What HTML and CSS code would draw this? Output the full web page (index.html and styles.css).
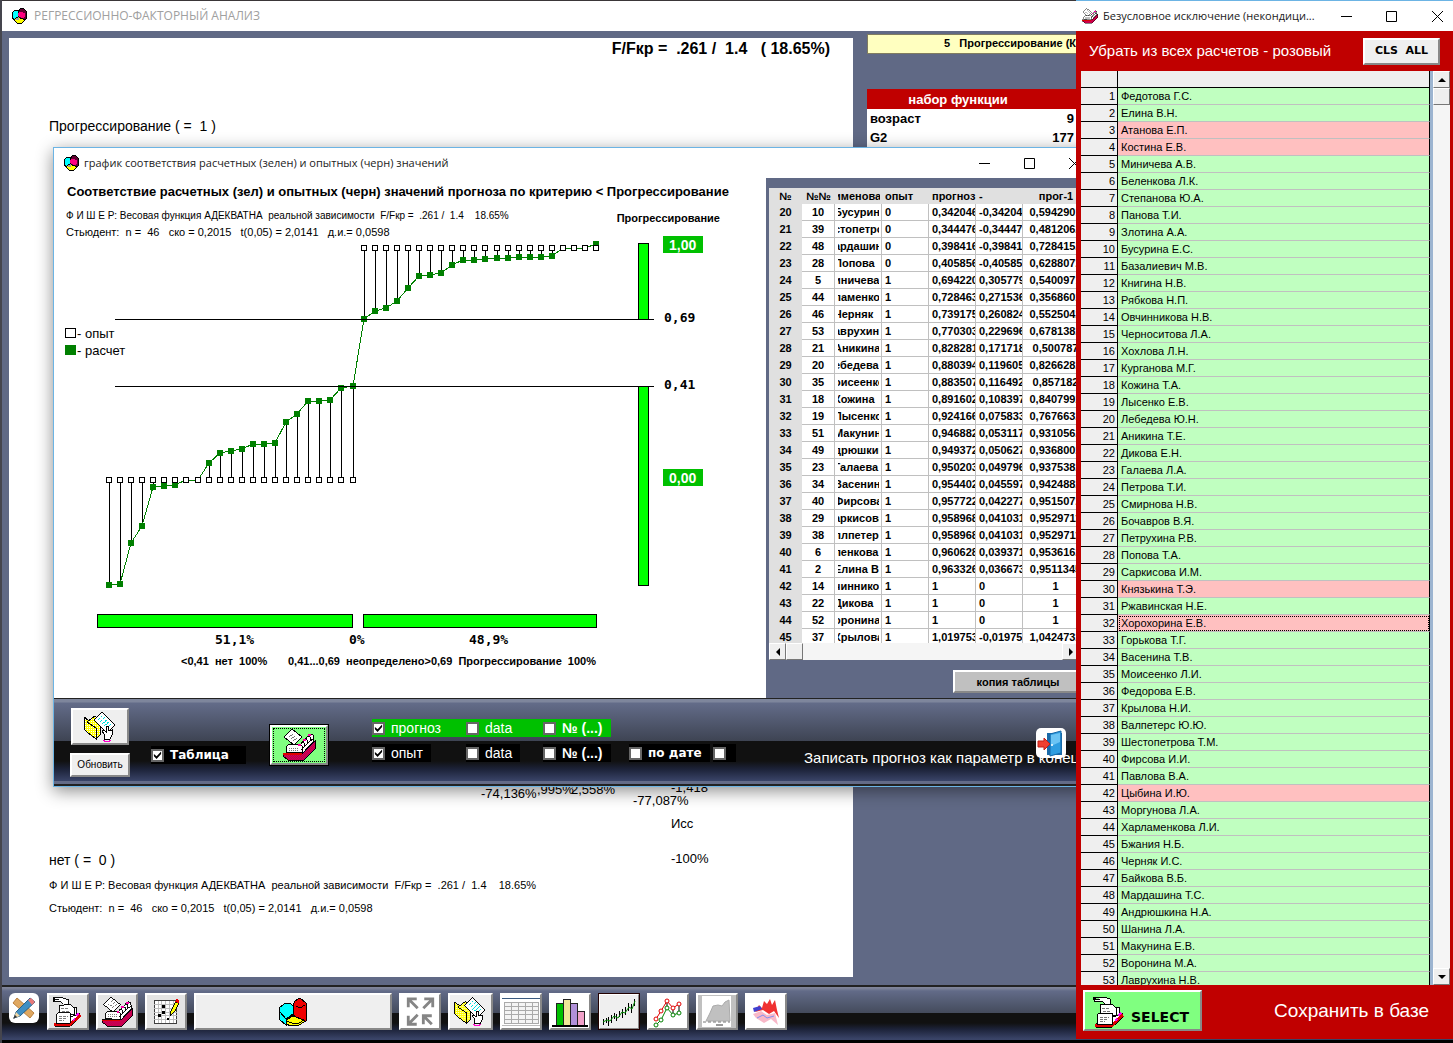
FILE: index.html
```html
<!DOCTYPE html>
<html lang="ru">
<head>
<meta charset="utf-8">
<title>Регрессионно-факторный анализ</title>
<link rel="stylesheet" href="styles.css">
</head>
<body>
<svg class="defs" aria-hidden="true">
  <defs>
    <pattern id="weave" width="2" height="2" patternUnits="userSpaceOnUse"><rect width="2" height="2" fill="#e00020"/><rect width="1" height="1" fill="#b00080"/><rect x="1" y="1" width="1" height="1" fill="#b00080"/></pattern>
    <pattern id="straw" width="2" height="2" patternUnits="userSpaceOnUse"><rect width="2" height="2" fill="#ffff00"/><rect width="1" height="1" fill="#fff"/></pattern>
    <symbol id="pie" viewBox="0 0 28 30">
      <path d="M0 11L5 7L11 6L14 9V18L7 23V28L1 23Z" fill="#0ff" stroke="#000"/>
      <path d="M1 15L7 22L14 17" fill="none" stroke="#000"/>
      <path class="slice" d="M14 8L16 4L21 1L27 6V24L24 25L14 18Z" stroke="#000"/>
      <path d="M17 9L21 11L26 8M21 11" fill="none" stroke="#000"/>
      <path d="M7 23L14 19L25 23V25L20 28L12 29L7 27Z" fill="#ff0" stroke="#000"/>
      <path d="M7 24L13 26H20L25 23" fill="none" stroke="#000"/>
    </symbol>
    <symbol id="smallpie" viewBox="0 0 16 16">
      <path d="M1 5L4 2L8 2V8L4 12L1 10Z" fill="#0ff" stroke="#000"/>
      <path d="M7 4L9 1L12 0L15 3V11L12 13L7 8Z" fill="#600030" stroke="#000"/>
      <path d="M7 5L9 4L14 5V9L11 10L7 8Z" fill="#ff0080"/>
      <path d="M3 12L7 9L14 12L11 15H6Z" fill="#ff0" stroke="#000"/>
      <path d="M4 11L8 9V12H5Z" fill="#a0a0a0"/>
    </symbol>
    <symbol id="cards" viewBox="0 0 34 34">
      <path d="M17 18L28 6L31 7L32 13L20 26Z" fill="#fff" stroke="#000"/>
      <path d="M1 25L20 26L33 13V21L22 32H6L1 28Z" fill="url(#weave)" stroke="#000"/>
      <path d="M4 24V19L7 16H18L20 18V25Z" fill="#fff" stroke="#000"/>
      <path d="M19 22L22 19V15L19 14M22 19L25 16V12L22 11M25 16L28 13V9L25 8M28 13L31 11" fill="none" stroke="#000"/>
      <path d="M2 9L10 1L20 9L12 17Z" fill="#fff" stroke="#000"/>
      <path d="M7 9L12 5M9 11L14 7M11 13L16 9M7 20H17M7 22H17" stroke="#777" stroke-dasharray="1 1" fill="none"/>
      <path d="M16 16h3v2h-3zM21 11h3v2h-3zM26 6h3v2h-3z" fill="#f0a"/>
      <path d="M1 26H20" fill="none" stroke="#e00000" stroke-width="2"/>
    </symbol>
    <symbol id="handcards" viewBox="0 0 34 34">
      <path d="M18 14H23V25H18M22 12H26V23" fill="#fff" stroke="#000"/>
      <path d="M3 29L8 26L29 19V23L19 32H3Z" fill="#fff" stroke="#000"/>
      <path d="M2 30H19L30 20" fill="none" stroke="#e00000" stroke-width="3"/>
      <path d="M7 10L19 9L23 13V20H7Z" fill="#fff" stroke="#000"/>
      <path d="M4 20L6 18H19V29H4Z" fill="#fff" stroke="#000"/>
      <path d="M9 13H17M10 16H18M7 22H16M7 24H14M7 26H12" stroke="#777" stroke-dasharray="3 1"/>
      <path d="M1 2H11L17 4V9H12L9 6H1V4H7" fill="#fff" stroke="#000"/>
      <path d="M0 2H3V5H0Z" fill="#000"/>
      <path d="M25 21L28 18M22 26L24 24" stroke="#f0f" stroke-width="2"/>
    </symbol>
    <symbol id="folder" viewBox="0 0 34 32">
      <path d="M1 6L13 15V28L4 21L1 18Z" fill="url(#straw)" stroke="#000"/>
      <path d="M4 11L12 5L17 10V24L13 28V17Z" fill="url(#straw)" stroke="#000"/>
      <path d="M11 9L19 1L32 14L24 22Z" fill="#fff" stroke="#000"/>
      <path d="M15 9L19 5M17 11L22 6M19 13L25 8M21 15L27 10M23 17L28 13" stroke="#0dd" stroke-dasharray="3 1"/>
      <path d="M21 28V23L19 20L21 19L23 21V15H25V20L29 19V24L27 28Z" fill="#fff" stroke="#000"/>
      <path d="M21 30H27M20 29H22M26 29H28" stroke="#f0c"/>
    </symbol>
  </defs>
</svg>

<div class="desktop">
  <main class="window main">
    <header class="titlebar inactive">
      <svg class="app-icon"><use href="#smallpie"/></svg>
      <h1>РЕГРЕССИОННО-ФАКТОРНЫЙ АНАЛИЗ</h1>
    </header>
    <div class="workspace">
      <article class="report">
        <p class="ratio">F/Fкр =&nbsp; .261 /&nbsp; 1.4 &nbsp; ( 18.65%)</p>
        <p class="pole">Прогрессирование ( =&nbsp; 1 )</p>
        <div class="factors">
          <span class="f f1">-74,136%</span><span class="f f2">,995%</span><span class="f f3">2,558%</span>
          <span class="f f4">-77,087%</span><span class="f f5">-1,418</span><span class="f f6">Исс</span><span class="f f7">-100%</span>
        </div>
        <p class="pole zero">нет ( =&nbsp; 0 )</p>
        <p class="stat">Ф И Ш Е Р: Весовая функция АДЕКВАТНА&nbsp; реальной зависимости&nbsp; F/Fкр =&nbsp; .261 /&nbsp; 1.4 &nbsp;&nbsp; 18.65%</p>
        <p class="stat">Стьюдент:&nbsp; n =&nbsp; 46 &nbsp; ско = 0,2015 &nbsp; t(0,05) = 2,0141 &nbsp; д.и.= 0,0598</p>
      </article>
      <aside class="side">
        <div class="criterion">5 &nbsp; Прогрессирование (Криз)</div>
        <table class="functions">
          <thead><tr><th colspan="2">набор функции</th></tr></thead>
          <tbody>
            <tr><td>возраст</td><td class="num">9</td></tr>
            <tr><td>G2</td><td class="num">177</td></tr>
          </tbody>
        </table>
      </aside>
    </div>
    <nav class="toolbar">
      <button class="round" aria-label="Инструменты"><svg viewBox="0 0 30 30"><path d="M8 5L25 20L21 25L4 10Z" fill="#e0a860" stroke="#b98040"/><path d="M5 25L7 19L21 5L26 9L11 23Z" fill="#3f8fc4" stroke="#25618c"/><path d="M19 7L22 5L26 9L23 12Z" fill="#e87a7a"/><path d="M5 25L7 19L11 23Z" fill="#f0d8a8"/><path d="M4 26L6 22L8 24Z" fill="#333"/></svg></button>
      <button class="tool" aria-label="Карточки"><svg viewBox="0 0 34 34"><use href="#handcards"/></svg></button>
      <button class="tool" aria-label="Картотека"><svg viewBox="0 0 34 34"><use href="#cards"/></svg></button>
      <button class="tool" aria-label="Правка таблицы"><svg viewBox="0 0 34 34" shape-rendering="crispEdges"><rect x="4" y="5" width="24" height="24" fill="#fff" stroke="#333"/><path d="M8 5V29M12 5V29M16 5V29M20 5V29M24 5V29M4 9H28M4 13H28M4 17H28M4 21H28M4 25H28" stroke="#bbb"/><path d="M12 10h3v3h-3zM12 16h3v3h-3zM8 19h3v3h-3zM17 23h3v3h-3z" fill="#000"/><path d="M21 21L22 15L27 6L30 8L26 16Z" fill="#ff0" stroke="#000"/><path d="M26 6L28 3L31 5L30 8Z" fill="#e00"/></svg></button>
      <button class="tool wide" aria-label="Анализ"><svg class="pie-icon" viewBox="0 0 28 30"><use href="#pie"/></svg></button>
      <button class="tool light" aria-label="Во весь экран"><svg viewBox="0 0 34 34"><g fill="none" stroke="#858585" stroke-width="3"><path d="M4 12V3H13M4 3L14 13"/><path d="M21 3H30V12M30 3L20 13"/><path d="M4 21V30H13M4 30L14 20"/><path d="M29 30L20 21M20 30V21H29"/></g></svg></button>
      <button class="tool mid" aria-label="Открыть"><svg viewBox="0 0 34 32"><use href="#folder"/></svg></button>
      <button class="tool chart light" aria-label="Таблица данных"><svg viewBox="0 0 38 32" shape-rendering="crispEdges"><rect x="0" y="2" width="38" height="1" fill="#3a5a80"/><rect x="2" y="6" width="34" height="21" fill="#f4f4f4" stroke="#aaa"/><path d="M2 10H36M2 14H36M2 18H36M2 23H36M9 6V27M16 6V27M23 6V27M30 6V27" stroke="#aaa"/><path d="M0 29H38" stroke="#bbb"/></svg></button>
      <button class="tool chart light" aria-label="Столбцы"><svg viewBox="0 0 38 32" shape-rendering="crispEdges"><g stroke="#222"><rect x="5" y="7" width="7" height="23" fill="#00c000"/><rect x="12" y="3" width="7" height="27" fill="#f0e898"/><rect x="19" y="7" width="7" height="23" fill="#b090d8"/><rect x="26" y="15" width="7" height="15" fill="#f0a0c8"/></g><path d="M1 30H37" stroke="#000" stroke-width="2"/></svg></button>
      <button class="tool chart focus" aria-label="Временной ряд"><svg viewBox="0 0 38 32"><g shape-rendering="crispEdges"><path d="M3 23V29M6 22V27M8 21V30M11 19V27M14 17V23M16 18V25M19 15V21M22 13V22M25 11V19M28 7V15M31 8V17M34 3V10" stroke="#000"/></g><path d="M3 26L7 24L10 25L14 20L18 22L22 16L25 17L29 11L32 13L35 5" fill="none" stroke="#080"/></svg></button>
      <button class="tool chart light" aria-label="Линии"><svg viewBox="0 0 38 32"><g fill="#fff"><path d="M7 23L12 15L18 5L24 12L30 8" fill="none" stroke="#e00000"/><path d="M7 29L12 24L18 12L24 19L30 17" fill="none" stroke="#008000"/><path d="M18 6V12M24 12V18M30 9V16" stroke="#000"/><g stroke="#e00000"><circle cx="7" cy="23" r="2"/><circle cx="12" cy="15" r="2"/><circle cx="18" cy="5" r="2"/><circle cx="24" cy="12" r="2"/><circle cx="30" cy="8" r="2"/></g><g stroke="#008000"><circle cx="7" cy="29" r="2"/><circle cx="12" cy="24" r="2"/><circle cx="18" cy="12" r="2"/><circle cx="24" cy="19" r="2"/><circle cx="30" cy="17" r="2"/></g></g></svg></button>
      <button class="tool chart grey" aria-label="Область"><svg viewBox="0 0 38 32"><rect x="4" width="29" height="31" fill="#fff"/><path d="M8 25L12 17L15 10L20 9L24 10L27 6L31 4L32 25Z" fill="#c0c0c0" stroke="#aaa"/><path d="M5 26H32" stroke="#777" stroke-dasharray="3 2"/><path d="M18 29H25" stroke="#333"/></svg></button>
      <button class="tool chart light" aria-label="Поверхность"><svg viewBox="0 0 38 32"><path d="M6 18L14 15L20 19L28 17L31 29L24 23L17 27L9 22Z" fill="#f8b8c8"/><path d="M8 16L12 9L15 12L17 5L20 8L23 3L25 9L28 4L30 14L32 22L27 15L22 18L16 14Z" fill="#f03030"/><path d="M6 12L13 10L15 13L7 16Z" fill="#4040d0"/><path d="M10 22L16 19L20 22L27 20" fill="none" stroke="#8090f0"/></svg></button>
    </nav>
  </main>

  <section class="window dialog">
    <header class="titlebar">
      <svg class="app-icon"><use href="#smallpie"/></svg>
      <h2>график соответствия расчетных (зелен) и опытных (черн) значений</h2>
      <div class="controls">
        <button aria-label="Свернуть"><svg viewBox="0 0 11 11"><path d="M0 5.5H11"/></svg></button>
        <button aria-label="Развернуть"><svg viewBox="0 0 11 11"><path d="M.5 .5H10.500V10.500H.5Z"/></svg></button>
        <button aria-label="Закрыть"><svg viewBox="0 0 11 11"><path d="M0 0L11 11M11 0L0 11"/></svg></button>
      </div>
    </header>
    <div class="dialog-body">
      <div class="plot">
        <h3>Соответствие расчетных (зел) и опытных (черн) значений прогноза по критерию &lt; Прогрессирование</h3>
        <div class="plot-head">
          <div>
            <p class="stat small">Ф И Ш Е Р: Весовая функция АДЕКВАТНА&nbsp; реальной зависимости&nbsp; F/Fкр =&nbsp; .261 /&nbsp; 1.4 &nbsp;&nbsp; 18.65%</p>
            <p class="stat">Стьюдент:&nbsp; n =&nbsp; 46 &nbsp; ско = 0,2015 &nbsp; t(0,05) = 2,0141 &nbsp; д.и.= 0,0598</p>
          </div>
          <strong>Прогрессирование</strong>
        </div>
        <svg class="chart-area" width="712" height="464" viewBox="54 234 712 464" role="img" aria-label="График соответствия">
          <defs>
            <marker id="calc" markerUnits="userSpaceOnUse" markerWidth="6" markerHeight="6" refX="3" refY="3"><rect width="6" height="6" fill="#008000"/></marker>
            <marker id="fact" markerUnits="userSpaceOnUse" markerWidth="6" markerHeight="6" refX="3" refY="3"><rect x=".5" y=".5" width="5" height="5" fill="#fff" stroke="#000"/></marker>
          </defs>
          <g shape-rendering="crispEdges">
            <path stroke="#000" d="M109 480V585M120 480V583M131 480V542M142 480V525M153 480V487M209 480V463M220 480V453M231 480V451M242 480V449M253 480V444M264 480V444M275 480V442M286 480V422M297 480V414M308 480V401M319 480V401M330 480V400M341 480V388M353 480V386M364 248V319M375 248V311M386 248V308M397 248V301M408 248V288M419 248V276M430 248V275M441 248V273M452 248V265M463 248V260M474 248V260M485 248V259M497 248V258M508 248V258M519 248V257M530 248V257M541 248V257M552 248V256"/>
            <polyline fill="none" stroke="#008000" marker-start="url(#calc)" marker-mid="url(#calc)" marker-end="url(#calc)" points="109,585 120,584 131,543 142,526 153,487 164,486 175,485 186,480 198,480 209,463 220,453 231,451 242,449 253,444 264,444 275,443 286,422 297,414 308,401 319,401 330,400 341,388 353,386 364,319 375,311 386,308 397,301 408,288 419,276 430,275 441,273 452,265 463,260 474,260 485,259 497,258 508,258 519,257 530,257 541,257 552,256 563,248 574,248 585,248 596,244"/>
            <polyline fill="none" marker-start="url(#fact)" marker-mid="url(#fact)" marker-end="url(#fact)" points="109,480 120,480 131,480 142,480 153,480 164,480 175,480 186,480 198,480 209,480 220,480 231,480 242,480 253,480 264,480 275,480 286,480 297,480 308,480 319,480 330,480 341,480 353,480"/>
            <polyline fill="none" marker-start="url(#fact)" marker-mid="url(#fact)" marker-end="url(#fact)" points="364,248 375,248 386,248 397,248 408,248 419,248 430,248 441,248 452,248 463,248 474,248 485,248 497,248 508,248 519,248 530,248 541,248 552,248 563,248 574,248 585,248 596,248"/>
            <path stroke="#000" d="M115 319.500H654M115 386.500H654"/>
            <g fill="#0f0" stroke="#000">
              <rect x="638.500" y="243.500" width="10" height="76"/><rect x="638.500" y="386.500" width="10" height="199"/>
              <rect x="97.500" y="614.500" width="255" height="13"/><rect x="363.500" y="614.500" width="233" height="13"/>
            </g>
            <rect x="663" y="236" width="40" height="17" fill="#00c000"/><rect x="663" y="469" width="40" height="17" fill="#00c000"/>
            <rect x="65.500" y="328.500" width="10" height="9" fill="#fff" stroke="#000"/><rect x="65" y="345" width="11" height="10" fill="#008000"/>
          </g>
          <g class="t-badge"><text x="669" y="250">1,00</text><text x="669" y="483">0,00</text></g>
          <g class="t-legend"><text x="77" y="338">- опыт</text><text x="77" y="355">- расчет</text></g>
          <g class="t-mono"><text x="664" y="322">0,69</text><text x="664" y="389">0,41</text><text x="215" y="644">51,1%</text><text x="349" y="644">0%</text><text x="469" y="644">48,9%</text></g>
          <g class="t-caption"><text x="181" y="665">&lt;0,41&#160; нет&#160; 100%</text><text x="288" y="665">0,41...0,69&#160; неопределено&gt;0,69&#160; Прогрессирование&#160; 100%</text></g>
        </svg>
      </div>
      <div class="values">
        <div class="values-scroll">
        <table class="grid">
          <colgroup><col class="c33"><col class="c33"><col class="c47"><col class="c47"><col class="c47"><col class="c47"><col class="c66"></colgroup>
          <thead><tr><th>№</th><th>№№</th><th class="nm"><span>именован</span></th><th class="l">опыт</th><th class="l">прогноз</th><th class="l">-</th><th>прог-1</th></tr></thead>
          <tbody>
          <tr><th>20<td>10<td class="nm"><span>Бусурина</span><td>0<td>0,342046<td>-0,342046<td>0,5942901
          <tr><th>21<td>39<td class="nm"><span>стопетров</span><td>0<td>0,344476<td>-0,344476<td>0,4812062
          <tr><th>22<td>48<td class="nm"><span>ардашин</span><td>0<td>0,398416<td>-0,398416<td>0,7284152
          <tr><th>23<td>28<td class="nm"><span>Попова</span><td>0<td>0,405856<td>-0,405856<td>0,6288072
          <tr><th>24<td>5<td class="nm"><span>иничева</span><td>1<td>0,694220<td>0,305779<td>0,5400971
          <tr><th>25<td>44<td class="nm"><span>ламенков</span><td>1<td>0,728463<td>0,271536<td>0,3568602
          <tr><th>26<td>46<td class="nm"><span>Черняк</span><td>1<td>0,739175<td>0,260824<td>0,5525042
          <tr><th>27<td>53<td class="nm"><span>аврухин</span><td>1<td>0,770303<td>0,229696<td>0,6781382
          <tr><th>28<td>21<td class="nm"><span>Аникина</span><td>1<td>0,828281<td>0,171718<td>0,500787
          <tr><th>29<td>20<td class="nm"><span>ебедева</span><td>1<td>0,880394<td>0,119605<td>0,8266282
          <tr><th>30<td>35<td class="nm"><span>оисеенко</span><td>1<td>0,883507<td>0,116492<td>0,857182
          <tr><th>31<td>18<td class="nm"><span>Кожина</span><td>1<td>0,891602<td>0,108397<td>0,8407992
          <tr><th>32<td>19<td class="nm"><span>Лысенко</span><td>1<td>0,924166<td>0,075833<td>0,7676632
          <tr><th>33<td>51<td class="nm"><span>Макунина</span><td>1<td>0,946882<td>0,053117<td>0,9310562
          <tr><th>34<td>49<td class="nm"><span>дрюшкин</span><td>1<td>0,949372<td>0,050627<td>0,9368002
          <tr><th>35<td>23<td class="nm"><span>Галаева</span><td>1<td>0,950203<td>0,049796<td>0,9375382
          <tr><th>36<td>34<td class="nm"><span>Васенина</span><td>1<td>0,954402<td>0,045597<td>0,9424882
          <tr><th>37<td>40<td class="nm"><span>Фирсова</span><td>1<td>0,957722<td>0,042277<td>0,9515072
          <tr><th>38<td>29<td class="nm"><span>аркисова</span><td>1<td>0,958968<td>0,041031<td>0,9529711
          <tr><th>39<td>38<td class="nm"><span>ллпетерс</span><td>1<td>0,958968<td>0,041031<td>0,9529711
          <tr><th>40<td>6<td class="nm"><span>ленкова</span><td>1<td>0,960628<td>0,039371<td>0,9536162
          <tr><th>41<td>2<td class="nm"><span>Елина В.</span><td>1<td>0,963326<td>0,036673<td>0,9511345
          <tr><th>42<td>14<td class="nm"><span>чинников</span><td>1<td>1<td>0<td>1
          <tr><th>43<td>22<td class="nm"><span>Дикова</span><td>1<td>1<td>0<td>1
          <tr><th>44<td>52<td class="nm"><span>оронина</span><td>1<td>1<td>0<td>1
          <tr><th>45<td>37<td class="nm"><span>Крылова</span><td>1<td>1,019753<td>-0,019753<td>1,0424732
          </tbody>
        </table>
        </div>
        <div class="hscroll"><button aria-label="Влево"><i class="arrow left"></i></button><button class="thumb" aria-label="Ползунок"></button><span class="track"></span><button aria-label="Вправо"><i class="arrow right"></i></button></div>
        <button class="copy">копия таблицы</button>
      </div>
    </div>
    <footer class="dialog-bar">
      <div class="stack">
        <button class="tool folder-btn" aria-label="Открыть"><svg viewBox="0 0 34 32"><use href="#folder"/></svg></button>
        <button class="tool refresh">Обновить</button>
      </div>
      <label class="check mono tab"><input type="checkbox" checked>Таблица</label>
      <button class="tool go" aria-label="Картотека"><svg viewBox="0 0 34 34"><use href="#cards"/></svg></button>
      <div class="checks">
        <label class="check green"><input type="checkbox" checked>прогноз</label>
        <label class="check green"><input type="checkbox">data</label>
        <label class="check green b"><input type="checkbox">№ (...)</label>
        <label class="check r2"><input type="checkbox" checked>опыт</label>
        <label class="check r2"><input type="checkbox">data</label>
        <label class="check b r2"><input type="checkbox">№ (...)</label>
        <label class="check mono r2 date"><input type="checkbox">по дате</label>
        <label class="check r2 bare"><input type="checkbox" aria-label="Дополнительно"></label>
      </div>
      <div class="save">
        <span>Записать прогноз как параметр в конец</span>
        <button class="door" aria-label="Выход"><svg viewBox="0 0 30 30"><path d="M11 5H26V27H11Z" fill="#1a6aa8"/><path d="M14 6L25 3V25L14 28Z" fill="#2f9de0" stroke="#1668a8"/><path d="M15 7L24 5V14L15 18Z" fill="#6cc4f4"/><circle cx="16" cy="17" r="1" fill="#fff"/><path d="M2 13H8V10L14 16L8 22V19H2Z" fill="#f04030" stroke="#c02018"/></svg></button>
      </div>
    </footer>
  </section>

  <section class="window exclude">
    <header class="titlebar">
      <svg class="app-icon" viewBox="0 0 34 34"><use href="#cards"/></svg>
      <h2>Безусловное исключение (некондици...</h2>
      <div class="controls">
        <button aria-label="Свернуть"><svg viewBox="0 0 11 11"><path d="M0 5.5H11"/></svg></button>
        <button aria-label="Развернуть"><svg viewBox="0 0 11 11"><path d="M.5 .5H10.500V10.500H.5Z"/></svg></button>
        <button aria-label="Закрыть"><svg viewBox="0 0 11 11"><path d="M0 0L11 11M11 0L0 11"/></svg></button>
      </div>
    </header>
    <div class="exclude-head"><p>Убрать из всех расчетов - розовый</p><button class="cls">CLS&nbsp; ALL</button></div>
    <div class="list">
      <div class="list-scroll">
      <table class="people">
        <thead><tr><th></th><th class="blank"></th></tr></thead>
        <tbody>
        <tr><th>1<td>Федотова Г.С.
        <tr><th>2<td>Елина В.Н.
        <tr class="off"><th>3<td>Атанова Е.П.
        <tr class="off"><th>4<td>Костина Е.В.
        <tr><th>5<td>Миничева А.В.
        <tr><th>6<td>Беленкова Л.К.
        <tr><th>7<td>Степанова Ю.А.
        <tr><th>8<td>Панова Т.И.
        <tr><th>9<td>Злотина А.А.
        <tr><th>10<td>Бусурина Е.С.
        <tr><th>11<td>Базалиевич М.В.
        <tr><th>12<td>Книгина Н.В.
        <tr><th>13<td>Рябкова Н.П.
        <tr><th>14<td>Овчинникова Н.В.
        <tr><th>15<td>Черноситова Л.А.
        <tr><th>16<td>Хохлова Л.Н.
        <tr><th>17<td>Курганова М.Г.
        <tr><th>18<td>Кожина Т.А.
        <tr><th>19<td>Лысенко Е.В.
        <tr><th>20<td>Лебедева Ю.Н.
        <tr><th>21<td>Аникина Т.Е.
        <tr><th>22<td>Дикова Е.Н.
        <tr><th>23<td>Галаева Л.А.
        <tr><th>24<td>Петрова Т.И.
        <tr><th>25<td>Смирнова Н.В.
        <tr><th>26<td>Бочавров В.Я.
        <tr><th>27<td>Петрухина Р.В.
        <tr><th>28<td>Попова Т.А.
        <tr><th>29<td>Саркисова И.М.
        <tr class="off"><th>30<td>Князькина Т.Э.
        <tr><th>31<td>Ржавинская Н.Е.
        <tr class="off current"><th>32<td>Хорохорина Е.В.
        <tr><th>33<td>Горькова Т.Г.
        <tr><th>34<td>Васенина Т.В.
        <tr><th>35<td>Моисеенко Л.И.
        <tr><th>36<td>Федорова Е.В.
        <tr><th>37<td>Крылова Н.И.
        <tr><th>38<td>Валпетерс Ю.Ю.
        <tr><th>39<td>Шестопетрова Т.М.
        <tr><th>40<td>Фирсова И.И.
        <tr><th>41<td>Павлова В.А.
        <tr class="off"><th>42<td>Цыбина И.Ю.
        <tr><th>43<td>Моргунова Л.А.
        <tr><th>44<td>Харламенкова Л.И.
        <tr><th>45<td>Бжания Н.Б.
        <tr><th>46<td>Черняк И.С.
        <tr><th>47<td>Байкова В.Б.
        <tr><th>48<td>Мардашина Т.С.
        <tr><th>49<td>Андрюшкина Н.А.
        <tr><th>50<td>Шанина Л.А.
        <tr><th>51<td>Макунина Е.В.
        <tr><th>52<td>Воронина М.А.
        <tr><th>53<td>Лаврухина Н.В.
        </tbody>
      </table>
      </div>
      <div class="vscroll"><button aria-label="Вверх"><i class="arrow up"></i></button><button class="thumb" aria-label="Ползунок"></button><span class="track"></span><button aria-label="Вниз"><i class="arrow down"></i></button></div>
    </div>
    <footer class="exclude-foot">
      <button class="select"><svg viewBox="0 0 34 34"><use href="#handcards"/></svg>SELECT</button>
      <p>Сохранить в базе</p>
    </footer>
  </section>
</div>
</body>
</html>
```
FILE: styles.css
```css
* { box-sizing: border-box; }
body { margin: 0; font: 12px/16px "Liberation Sans", Arial, sans-serif; color: #000; background: #000; }
h1, h2, h3, p { margin: 0; font-weight: normal; }
button { font: inherit; color: inherit; padding: 0; margin: 0; border: 0; background: none; }
table { border-spacing: 0; border-collapse: separate; }
th, td { padding: 0; }
.defs { display: block; width: 0; height: 0; }
.defs symbol, .app-icon { shape-rendering: crispEdges; }
.slice { fill: #f00000; }

.desktop { position: relative; height: 100vh; padding: 1px 0 3px 2px; overflow: hidden; background: linear-gradient(90deg, #45454d 2px, transparent 2px), linear-gradient(#3a3638 2px, #000 60px); }
.window { display: flex; flex-direction: column; }

/* title bars */
.titlebar { display: flex; align-items: center; flex: none; height: 30px; padding-left: 9px; background: #fff; }
.titlebar h1, .titlebar h2 { flex: 1; min-width: 0; font: 12px/16px "Open Sans", "Noto Sans", sans-serif; white-space: nowrap; }
.titlebar h2 { margin-left: -2px; color: #222; font-size: 11px; }
.inactive h1 { color: #a0a0a0; }
.app-icon { width: 16px; height: 16px; margin-right: 7px; flex: none; }
.controls { display: flex; }
.controls button { width: 45px; height: 30px; }
.controls svg { display: block; width: 11px; height: 11px; margin: auto; fill: none; stroke: #000; }

/* main window */
.main { height: 100%; background: #606985; }
.workspace { display: flex; flex: 1; min-height: 0; gap: 14px; padding: 7px 0 8px 7px; }
.report { display: flex; flex-direction: column; flex: 1; padding: 0 23px 61px 40px; background: #fff; white-space: nowrap; }
.ratio { align-self: flex-end; margin-bottom: 58px; padding-top: 1px; font: bold 16px/20px "Liberation Sans", sans-serif; }
.pole { font-size: 14px; line-height: 18px; }
.zero { margin-bottom: 8px; }
.stat { font-size: 11px; line-height: 16px; white-space: nowrap; }
.small { font-size: 10px; }
.report .stat { margin-top: 7px; }
.zero + .stat { margin-top: 0; }
.factors { position: relative; flex: 1; font-size: 13px; line-height: 16px; }
.f { position: absolute; }
.f1 { left: 432px; bottom: 49px; }
.f2 { left: 488px; bottom: 53px; }
.f3 { left: 522px; bottom: 53px; }
.f4 { left: 584px; bottom: 42px; }
.f5 { left: 622px; bottom: 55px; }
.f6 { left: 622px; bottom: 19px; }
.f7 { left: 622px; bottom: -16px; }
.side { flex: none; width: 586px; margin-top: -4px; }
.criterion { height: 20px; padding-left: 76px; border: 1px solid #807c60; background: #ffffc0; font-size: 11px; font-weight: bold; }
.functions { width: 210px; margin-top: 35px; background: #fff; font: bold 13px/19px "Liberation Sans", sans-serif; }
.functions thead th { height: 20px; padding-right: 28px; background: #c00000; color: #fff; }
.functions td { padding: 0 3px; }
.functions .num { text-align: right; }

/* bottom toolbar */
.toolbar { display: flex; align-items: flex-start; flex: none; gap: 7px; height: 55px; padding: 6px 7px; border-top: 2px solid #222; background: linear-gradient(#80859a 1px, #626b88 4px, #444b5c 26px, #111 26px, #111 36px, #1c2238 42px, #3a4468 52px); }
.round { width: 30px; height: 30px; margin-right: 1px; border-radius: 6px; background: #fff; }
.round svg { display: block; width: 30px; height: 30px; }
.tool { display: grid; place-items: center; border: 2px solid; border-color: #fff #888 #888 #fff; background: #e4e4e4; }
.toolbar .tool { width: 42px; height: 37px; }
.toolbar .tool svg { width: 33px; height: 32px; }
.toolbar .wide { width: 198px; background: #efefef; }
.toolbar .wide svg { width: 28px; height: 30px; }
.toolbar .mid { width: 45px; background: #efefef; }
.toolbar .chart { width: 42px; }
.toolbar .chart svg { width: 38px; height: 32px; }
.toolbar .light { background: #fff; }
.toolbar .grey { background: #c0c0c0; }
.toolbar .focus { background: #efefef; outline: 1px solid #200; outline-offset: -1px; }

/* dialog */
.dialog { position: absolute; left: 53px; top: 147px; right: 355px; border: 1px solid #6cb4e4; box-shadow: 0 4px 16px rgba(0, 0, 0, .45); }
.dialog-body { display: flex; background: #606985; }
.plot { flex: none; width: 712px; background: #fff; }
.plot h3 { height: 29px; padding: 6px 0 0 13px; font: bold 13px/16px "Liberation Sans", sans-serif; white-space: nowrap; }
.plot-head { display: flex; justify-content: space-between; height: 27px; padding: 1px 46px 0 12px; }
.plot-head strong { font: bold 11px/20px "Liberation Sans", sans-serif; }
.chart-area { display: block; }
.t-badge { font: bold 14px "Liberation Sans", sans-serif; fill: #fff; }
.t-legend { font: 13px "Liberation Sans", sans-serif; }
.t-mono { font: bold 13px "DejaVu Sans Mono", monospace; }
.t-caption { font: bold 11px "Liberation Sans", sans-serif; }
.values { display: flex; flex-direction: column; flex: 1; min-width: 0; padding: 10px 0 0 3px; }
.values-scroll { height: 455px; overflow: hidden; }
.grid { width: 320px; table-layout: fixed; background: #fff; font: bold 11px/16px "Liberation Sans", sans-serif; }
.c33 { width: 33px; }
.c47 { width: 47px; }
.c66 { width: 66px; }
.grid th { padding-bottom: 1px; background: #e0e0e0; text-align: center; }
.grid thead th { height: 16px; padding-bottom: 0; overflow: hidden; }
.grid th.l { text-align: left; padding-left: 3px; }
.grid td { height: 17px; padding-left: 3px; border: 1px solid #c0c0c0; border-width: 0 1px 1px 0; overflow: hidden; white-space: nowrap; }
.grid td:nth-child(2), .grid td:last-child { padding: 0; text-align: center; }
.grid .nm { padding: 0 2px 0 3px; }
.nm span { display: block; overflow: hidden; text-indent: -4px; white-space: nowrap; }
.hscroll { display: flex; height: 17px; width: 310px; background: #f4f4f4; }
.hscroll button, .vscroll button { display: grid; place-items: center; flex: none; width: 17px; height: 17px; border: 1px solid; border-color: #fff #777 #777 #fff; background: #efefef; }
.track { flex: 1; background: #f5f5f5; }
.arrow { width: 0; height: 0; border: 4px solid transparent; }
.left { border-right-color: #000; border-left-width: 0; }
.right { border-left-color: #000; border-right-width: 0; }
.up { border-bottom-color: #000; border-top-width: 0; }
.down { border-top-color: #000; border-bottom-width: 0; }
.copy { width: 130px; height: 23px; margin: 10px 0 0 184px; border: 2px solid; border-color: #fff #888 #888 #fff; background: #c0c0c0; font: bold 11px/16px "Liberation Sans", sans-serif; }
.dialog-bar { display: flex; align-items: flex-start; height: 88px; padding: 9px 0 0 16px; border-top: 1px solid #222; border-bottom: 2px solid #222; background: linear-gradient(#7e869c 3px, #636c89 4px, #3e4453 42px, #111 42px, #111 62px, #1c2238 70px, #3a4468 82px, #636b88 82px); }
.stack { display: grid; gap: 8px; justify-items: center; width: 60px; }
.folder-btn { width: 58px; height: 37px; background: #efefef; }
.folder-btn svg { width: 34px; height: 32px; }
.refresh { width: 60px; height: 24px; background: #efefef; font-size: 10px; }
.check { display: flex; align-items: center; height: 18px; padding-right: 8px; background: #000; color: #fff; font-size: 14px; white-space: nowrap; }
.check input { appearance: none; width: 13px; height: 13px; margin: 0 6px 0 0; border: 2px solid #666; background: #fff; flex: none; }
.check input:checked::before { content: ""; display: block; width: 9px; height: 9px; background: #000; clip-path: polygon(10% 40%, 40% 65%, 90% 10%, 90% 40%, 40% 95%, 10% 65%); }
.mono { font: bold 12px/16px "DejaVu Sans", sans-serif; }
.b { font-weight: bold; }
.tab { width: 95px; margin: 38px 0 0 21px; }
.go { position: relative; width: 58px; height: 40px; margin: 17px 0 0 24px; background: #80ff80; outline: 1px solid #000; }
.go::after { content: ""; position: absolute; inset: 1px; border: 1px dotted #000; }
.go svg { width: 34px; height: 34px; }
.checks { display: grid; grid-template-columns: 94px 77px 86px 84px 17px; grid-template-rows: 18px 18px; row-gap: 7px; justify-items: start; margin: 11px 0 0 44px; }
.checks .green { justify-self: stretch; background: #00c000; }
.checks .green.b { justify-self: start; }
.checks .r2 { grid-row: 2; }
.bare { padding-right: 4px; }
.save { position: relative; margin: 42px 0 0 74px; color: #fff; font-size: 15px; white-space: nowrap; }
.door { position: absolute; right: 13px; bottom: 8px; width: 30px; height: 30px; border-radius: 5px; background: #fff; }
.door svg { display: block; width: 30px; height: 30px; }

/* exclusion list window */
.exclude { position: absolute; top: 0; right: 0; bottom: 4px; width: 377px; border-top: 1px solid #6cb4e4; background: #c00000; }
.exclude .titlebar { padding-left: 6px; }
.exclude .controls button:last-child { width: 46px; margin-right: -7px; }
.exclude-head { display: flex; justify-content: space-between; align-items: center; flex: none; height: 40px; padding: 0 13px; color: #fff; font-size: 15px; }
.cls { width: 77px; height: 27px; border: 2px solid; border-color: #fff #888 #888 #fff; background: #efefef; color: #000; font: bold 11px/16px "DejaVu Sans", sans-serif; }
.list { display: flex; flex: 1; min-height: 0; margin: 0 3px 0 5px; background: #efefef; }
.list-scroll { flex: 1; overflow: hidden; border-right: 3px solid #9cb4d0; }
.people { width: 100%; font-size: 11px; line-height: 16px; }
.people th { width: 37px; height: 17px; padding-right: 2px; border: solid #000; border-width: 0 1px 1px 0; background: #efefef; font-weight: normal; text-align: right; }
.people th.blank { width: auto; }
.people td { height: 17px; padding-left: 3px; border: solid; border-width: 0 1px 1px 0; border-color: #c0c0c0 #000; background: #c0ffc0; }
.people .off td { background: #ffc0c0; }
.people .current td { outline: 1px dotted #000; outline-offset: -2px; }
.vscroll { display: flex; flex-direction: column; width: 17px; }
.exclude-foot { display: flex; justify-content: space-between; align-items: center; flex: none; height: 54px; padding: 0 24px 3px 7px; color: #fff; font-size: 19px; }
.select { display: flex; align-items: flex-end; gap: 4px; width: 119px; height: 41px; padding: 0 8px; border: 2px solid; border-color: #fff #888 #888 #fff; background: #80ff80; color: #000; font: bold 14px/24px "DejaVu Sans", sans-serif; }
.select svg { width: 34px; height: 34px; }
```
